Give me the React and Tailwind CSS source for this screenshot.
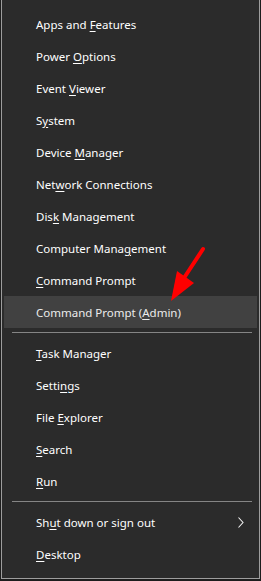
import React from 'react';

const items = [
  { pre: 'Apps and ', key: 'F', post: 'eatures' },
  { pre: 'Power ', key: 'O', post: 'ptions' },
  { pre: 'Event ', key: 'V', post: 'iewer' },
  { pre: 'S', key: 'y', post: 'stem' },
  { pre: 'Device ', key: 'M', post: 'anager' },
  { pre: 'Net', key: 'w', post: 'ork Connections' },
  { pre: 'Dis', key: 'k', post: ' Management' },
  { pre: 'Computer Mana', key: 'g', post: 'ement' },
  { pre: '', key: 'C', post: 'ommand Prompt' },
  { pre: 'Command Prompt (', key: 'A', post: 'dmin)', active: true },
  { sep: true },
  { pre: '', key: 'T', post: 'ask Manager' },
  { pre: 'Setti', key: 'n', post: 'gs' },
  { pre: 'File ', key: 'E', post: 'xplorer' },
  { pre: '', key: 'S', post: 'earch' },
  { pre: '', key: 'R', post: 'un' },
  { sep: true },
  { pre: 'Sh', key: 'u', post: 't down or sign out', sub: true },
  { pre: '', key: 'D', post: 'esktop' },
];

const Row = ({ item }) => (
  <div
    className={`h-[32px] mx-[2px] pl-[32px] pr-[12px] flex items-center justify-between ${
      item.active ? 'bg-[#414141] text-[#ececec]' : 'text-white'
    }`}
  >
    <span className="pt-[1px]">
      {item.pre}
      <u className="underline underline-offset-[2px] decoration-1">{item.key}</u>
      {item.post}
    </span>
    {item.sub && (
      <svg width="6" height="11" viewBox="0 0 6 11" className="mr-[1px]">
        <path d="M0.5 0.5 L5 5.5 L0.5 10.5" fill="none" stroke="#f2f2f2" strokeWidth="1.1" />
      </svg>
    )}
  </div>
);

export default function App() {
  return (
    <div className="w-[261px] h-[581px] bg-[#1d1d1d] relative" style={{ fontFamily: '"Noto Sans", "Open Sans", sans-serif' }}>
      <div className="ml-[1px] w-[259px] h-[579px] bg-[#2b2b2b] border-x border-b border-[#9d9d9d] pt-[8px] text-[11.5px] leading-none">
        {items.map((item, i) =>
          item.sep ? (
            <div key={i} className="h-[9px] flex items-center pl-[10px] pr-[7px]">
              <div className="h-px w-full bg-[#858585]" />
            </div>
          ) : (
            <Row key={i} item={item} />
          )
        )}
      </div>

      {/* red annotation arrow */}
      <svg className="absolute left-0 top-0 pointer-events-none" width="261" height="581">
        <line x1="203" y1="249" x2="184" y2="278" stroke="#ff0000" strokeWidth="4" strokeLinecap="round" />
        <polygon points="171,301 177,271 194,283" fill="#ff0000" />
      </svg>
    </div>
  );
}
